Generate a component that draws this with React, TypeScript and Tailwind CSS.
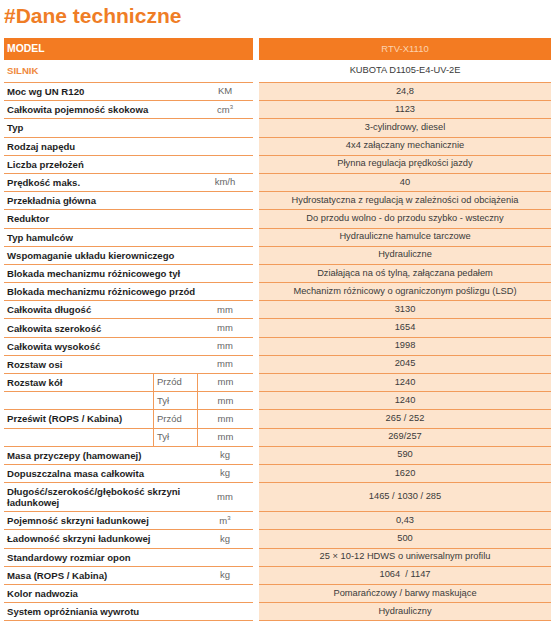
type Row = {
  label: string;
  sub?: string;
  unit?: React.ReactNode;
  value: string;
  tall?: boolean;
};

const rows: Row[] = [
  { label: 'Moc wg UN R120', unit: 'KM', value: '24,8' },
  { label: 'Całkowita pojemność skokowa', unit: <>cm<sup className="text-[6px]">3</sup></>, value: '1123' },
  { label: 'Typ', value: '3-cylindrowy, diesel' },
  { label: 'Rodzaj napędu', value: '4x4 załączany mechanicznie' },
  { label: 'Liczba przełożeń', value: 'Płynna regulacja prędkości jazdy' },
  { label: 'Prędkość maks.', unit: 'km/h', value: '40' },
  { label: 'Przekładnia główna', value: 'Hydrostatyczna z regulacją w zależności od obciążenia' },
  { label: 'Reduktor', value: 'Do przodu wolno - do przodu szybko - wsteczny' },
  { label: 'Typ hamulców', value: 'Hydrauliczne hamulce tarczowe' },
  { label: 'Wspomaganie układu kierowniczego', value: 'Hydrauliczne' },
  { label: 'Blokada mechanizmu różnicowego tył', value: 'Działająca na oś tylną, załączana pedałem' },
  { label: 'Blokada mechanizmu różnicowego przód', value: 'Mechanizm różnicowy o ograniczonym poślizgu (LSD)' },
  { label: 'Całkowita długość', unit: 'mm', value: '3130' },
  { label: 'Całkowita szerokość', unit: 'mm', value: '1654' },
  { label: 'Całkowita wysokość', unit: 'mm', value: '1998' },
  { label: 'Rozstaw osi', unit: 'mm', value: '2045' },
  { label: 'Rozstaw kół', sub: 'Przód', unit: 'mm', value: '1240' },
  { label: '', sub: 'Tył', unit: 'mm', value: '1240' },
  { label: 'Prześwit (ROPS / Kabina)', sub: 'Przód', unit: 'mm', value: '265 / 252' },
  { label: '', sub: 'Tył', unit: 'mm', value: '269/257' },
  { label: 'Masa przyczepy (hamowanej)', unit: 'kg', value: '590' },
  { label: 'Dopuszczalna masa całkowita', unit: 'kg', value: '1620' },
  { label: 'Długość/szerokość/głębokość skrzyni ładunkowej', unit: 'mm', value: '1465 / 1030 / 285', tall: true },
  { label: 'Pojemność skrzyni ładunkowej', unit: <>m<sup className="text-[6px]">3</sup></>, value: '0,43' },
  { label: 'Ładowność skrzyni ładunkowej', unit: 'kg', value: '500' },
  { label: 'Standardowy rozmiar opon', value: '25 × 10-12 HDWS o uniwersalnym profilu' },
  { label: 'Masa (ROPS / Kabina)', unit: 'kg', value: '1064  / 1147' },
  { label: 'Kolor nadwozia', value: 'Pomarańczowy / barwy maskujące' },
  { label: 'System opróżniania wywrotu', value: 'Hydrauliczny' },
];

function SpecRow({ row }: { row: Row }) {
  const h = row.tall ? 'h-[29px]' : 'h-[18.2px]';
  const hasSub = row.sub !== undefined;
  return (
    <div className={`flex ${h}`}>
      <div className="flex w-[249px] border-b border-[#f29b5a]">
        <div className="flex min-w-0 flex-1 items-center pl-[3px] text-[9.6px] font-bold leading-[11px] text-[#1e1e1e]">
          <span className={row.tall ? 'w-[180px]' : 'whitespace-nowrap'}>{row.label}</span>
        </div>
        {hasSub && (
          <div className="flex w-[44px] items-center border-l border-[#f29b5a] pl-[3px] text-[9.5px] text-[#666]">
            {row.sub}
          </div>
        )}
        {(row.unit || hasSub) && (
          <div
            className={`flex w-[56px] items-center justify-center text-[9.5px] text-[#666] ${
              hasSub ? 'border-l border-[#f29b5a]' : ''
            }`}
          >
            {row.unit}
          </div>
        )}
      </div>
      <div className="w-[6px]" />
      <div className="flex flex-1 items-center justify-center whitespace-pre border-b border-[#f29b5a] bg-[#fde4cd] text-[9.3px] text-[#3a3a3a]">
        {row.value}
      </div>
    </div>
  );
}

export default function App() {
  return (
    <div className="h-[634px] w-[556px] overflow-hidden bg-white pl-[4px] pr-[5px] font-['Liberation_Sans',Arial,sans-serif]">
      <h1 className="h-[38px] pt-[3px] text-[21px] font-bold leading-[26px] text-[#ef7d26]">
        #Dane techniczne
      </h1>

      {/* header */}
      <div className="flex h-[22px]">
        <div className="flex w-[249px] items-center bg-[#f37b22] pl-[3px] text-[10.4px] font-bold text-white">
          MODEL
        </div>
        <div className="w-[6px]" />
        <div className="flex flex-1 items-center justify-center bg-[#f37b22] text-[9.5px] text-[#fcd2ae]">
          RTV-X1110
        </div>
      </div>

      <div className="flex h-[23px]">
        <div className="flex w-[249px] items-center border-b border-[#f29b5a] pl-[3px] text-[9.6px] font-bold text-[#ef8a3e]">
          SILNIK
        </div>
        <div className="w-[6px]" />
        <div className="flex flex-1 items-center justify-center border-b border-[#f29b5a] text-[9.3px] text-[#3a3a3a]">
          KUBOTA D1105-E4-UV-2E
        </div>
      </div>

      {rows.map((row, i) => (
        <SpecRow key={i} row={row} />
      ))}
    </div>
  );
}
